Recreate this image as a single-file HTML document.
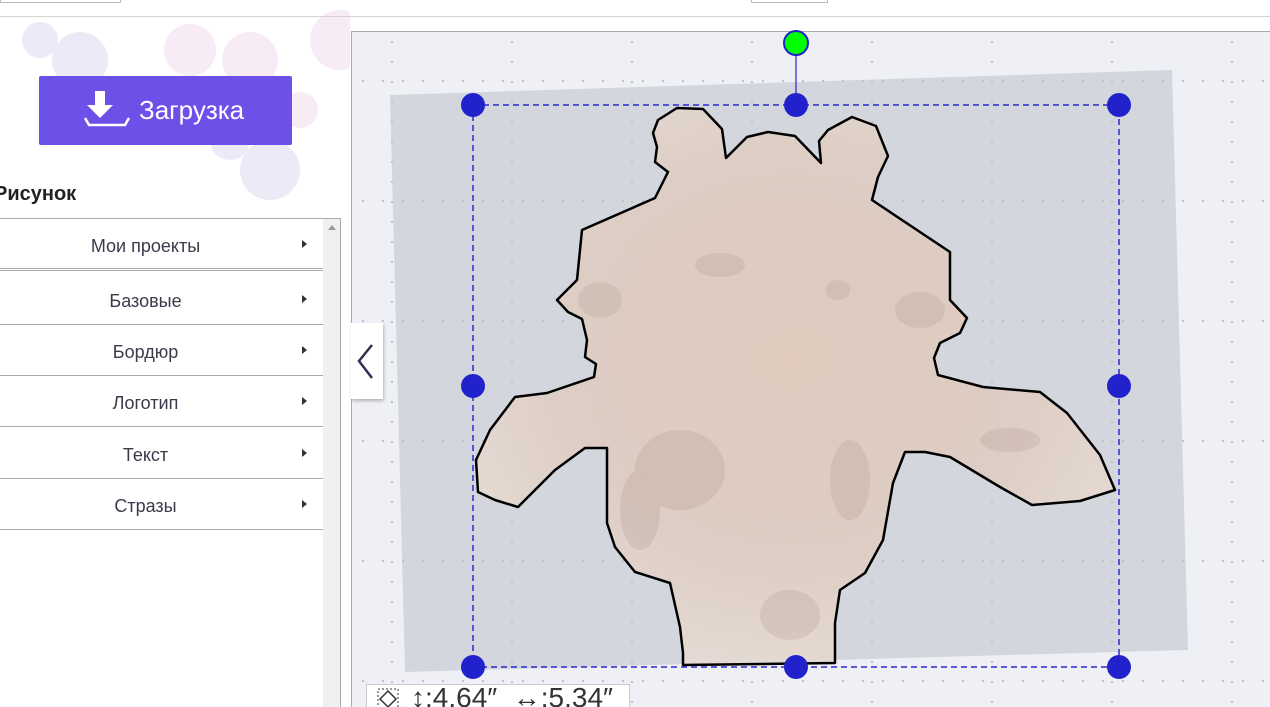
<!DOCTYPE html>
<html><head><meta charset="utf-8"><style>
*{margin:0;padding:0;box-sizing:border-box}
html,body{width:1270px;height:707px;overflow:hidden}
body{background:#fff;font-family:"Liberation Sans","DejaVu Sans",sans-serif;position:relative}
.topline{position:absolute;left:0;top:16px;width:1270px;height:1px;background:#d4d4d4}
.tb1{position:absolute;left:0;top:-1px;width:121px;height:4px;border:1px solid #bbb;border-top:none}
.tb2{position:absolute;left:751px;top:-1px;width:77px;height:4px;border:1px solid #bbb;border-top:none}
.btn{position:absolute;left:39px;top:76px;width:253px;height:69px;background:#6c50e8;border-radius:2px;color:#fff;font-size:26px}
.btn span{position:absolute;left:100px;top:19px}
.title{position:absolute;left:-6px;top:183px;font-size:20px;font-weight:bold;color:#222}
.list{position:absolute;left:0;top:218px;width:341px;height:489px;border-top:1px solid #aaa;border-right:1px solid #aaa}
.sb{position:absolute;left:323px;top:0;width:17px;height:489px;background:#f0f0f0}
.item{position:absolute;left:0;width:323px;height:51px;border-bottom:1px solid #aaa;font-size:18px;color:#3a3a4a;text-align:center;line-height:54px;padding-right:32px}
.item i{position:absolute;right:16px;top:21px;width:0;height:0;border-left:5px solid #333;border-top:4px solid transparent;border-bottom:4px solid transparent}
.panel{position:absolute;left:351px;top:31px;width:930px;height:690px;border:1px solid #aaa;background:#eff0f5;overflow:hidden}
.tab{position:absolute;left:351px;top:323px;width:32px;height:76px;background:#fff;box-shadow:1px 2px 3px rgba(0,0,0,.25)}
.info{position:absolute;left:366px;top:684px;width:264px;height:30px;background:#fff;border:1px solid #ccc;font-size:28px;color:#333}
</style></head><body>
<svg style="position:absolute;left:0;top:0" width="350" height="200">
<g fill="#eceaf6">
<circle cx="80" cy="60" r="28"/><circle cx="40" cy="40" r="18"/><circle cx="270" cy="170" r="30"/><circle cx="230" cy="140" r="20"/>
</g>
<g fill="#f7ecf5"><circle cx="190" cy="50" r="26"/><circle cx="250" cy="60" r="28"/><circle cx="340" cy="40" r="30"/><circle cx="300" cy="110" r="18"/></g>
</svg>
<div class="topline"></div><div class="tb1"></div><div class="tb2"></div>
<div class="btn"><svg style="position:absolute;left:44px;top:15px" width="50" height="40"><path d="M12 0h10v14h8L17 27 4 14h8z" fill="#fff"/><path d="M2 27l4 7h36l4-7" fill="none" stroke="#fff" stroke-width="2.5"/></svg><span>Загрузка</span></div>
<div class="title">Рисунок</div>
<div class="list">
<div class="sb"><div style="position:absolute;left:5px;top:6px;border-bottom:5px solid #999;border-left:4px solid transparent;border-right:4px solid transparent"></div></div>
<div class="item" style="top:0;height:52px;border-bottom:3px double #aaa">Мои проекты<i></i></div>
<div class="item" style="top:55px">Базовые<i></i></div>
<div class="item" style="top:106px">Бордюр<i></i></div>
<div class="item" style="top:157px">Логотип<i></i></div>
<div class="item" style="top:209px">Текст<i></i></div>
<div class="item" style="top:260px">Стразы<i></i></div>
</div>
<div class="panel"></div>
<svg style="position:absolute;left:0;top:0" width="1270" height="707">
<defs>
<radialGradient id="gf" cx="0.5" cy="0.45" r="0.6"><stop offset="0" stop-color="#dfcabd"/><stop offset="0.6" stop-color="#ddcdc4"/><stop offset="1" stop-color="#e6dcd6"/></radialGradient>
<clipPath id="pc"><rect x="352" y="32" width="918" height="675"/></clipPath>
</defs>
<g clip-path="url(#pc)">
<polygon points="390,95 1172,70 1188,650 405,672" fill="#d3d6dd"/>
</g>
<g id="grid" fill="#c0c1c8" clip-path="url(#pc)"></g>
<polygon fill="url(#gf)" stroke="#000" stroke-width="2.5" stroke-linejoin="round" points="677,108 703,109 722,129 726,158 747,137 768,132 795,136 821,163 819,141 828,130 852,117 876,126 888,156 878,177 872,200 950,252 950,300 967,318 960,333 940,343 934,358 938,375 983,387 1040,392 1067,413 1100,455 1115,490 1080,501 1032,505 1000,487 950,457 925,452 905,452 893,483 883,540 865,573 840,590 835,623 835,663 683,665 683,653 680,627 670,583 635,572 615,547 607,523 607,448 585,448 555,470 518,507 495,500 478,492 476,460 490,430 515,397 547,393 594,377 596,364 585,357 587,340 582,319 568,312 557,300 577,280 582,230 655,198 668,172 655,162 657,147 653,133 658,120"/>
<g fill="#a89088" opacity=".22">
<ellipse cx="720" cy="265" rx="25" ry="12"/><ellipse cx="838" cy="290" rx="12" ry="10"/><ellipse cx="600" cy="300" rx="22" ry="18"/><ellipse cx="920" cy="310" rx="25" ry="18"/><ellipse cx="790" cy="615" rx="30" ry="25"/><ellipse cx="680" cy="470" rx="45" ry="40"/><ellipse cx="1010" cy="440" rx="30" ry="12"/><ellipse cx="640" cy="510" rx="20" ry="40"/><ellipse cx="850" cy="480" rx="20" ry="40"/>
</g>
<rect x="473" y="105" width="646" height="562" fill="none" stroke="#2828d0" stroke-width="1.5" stroke-dasharray="6,4"/>
<line x1="796" y1="44" x2="796" y2="105" stroke="#2222cc" stroke-width="1.2"/>
<circle cx="796" cy="43" r="12" fill="#00ff00" stroke="#2222cc" stroke-width="2"/>
<g fill="#2222cc">
<circle cx="473" cy="105" r="12"/><circle cx="796" cy="105" r="12"/><circle cx="1119" cy="105" r="12"/>
<circle cx="473" cy="386" r="12"/><circle cx="1119" cy="386" r="12"/>
<circle cx="473" cy="667" r="12"/><circle cx="796" cy="667" r="12"/><circle cx="1119" cy="667" r="12"/>
</g>
</svg>
<div class="tab"><svg width="32" height="76"><path d="M21 22L8 38l13 17" fill="none" stroke="#2d3250" stroke-width="2.5"/></svg></div>
<div class="info"><svg style="position:absolute;left:8px;top:1px" width="28" height="24"><rect x="3" y="3" width="20" height="20" fill="none" stroke="#333" stroke-dasharray="2,2"/><path d="M13 5l8 8-8 8-8-8z" fill="none" stroke="#333" stroke-width="1.5"/></svg><span style="position:absolute;left:44px;top:-3px">↕:4.64″ &nbsp;↔:5.34″</span></div>
<script>
(function(){var g=document.getElementById('grid'),s='';
for(var x=392;x<1270;x+=120)for(var y=31;y<707;y+=20)s+='<rect x="'+(x-1)+'" y="'+(y+10)+'" width="2" height="2"/>';
for(var y=81;y<707;y+=120)for(var x=352;x<1270;x+=20)s+='<rect x="'+(x+10)+'" y="'+(y-1)+'" width="2" height="2"/>';
g.innerHTML=s;})();
</script>
</body></html>
